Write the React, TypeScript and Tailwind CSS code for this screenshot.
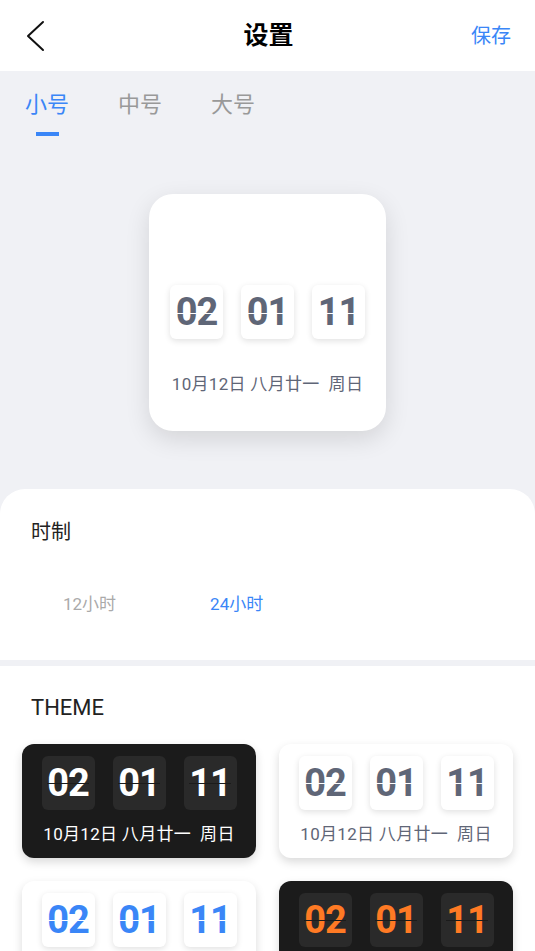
type Theme = {
  card: string;
  box: string;
  digit: string;
  line: string;
  date: string;
};

const themes: Theme[] = [
  { card: 'bg-[#1b1b1b]', box: 'bg-[#2a2a2a]', digit: 'text-white', line: 'bg-[#1b1b1b]', date: 'text-white' },
  { card: 'bg-white', box: 'bg-white shadow-[0_2px_6px_rgba(0,0,0,0.12)]', digit: 'text-[#5f6677]', line: 'bg-white', date: 'text-[#5f6677]' },
  { card: 'bg-white', box: 'bg-white shadow-[0_2px_6px_rgba(0,0,0,0.12)]', digit: 'text-[#3a86f7]', line: 'bg-white', date: 'text-[#3a86f7]' },
  { card: 'bg-[#1b1b1b]', box: 'bg-[#2a2a2a]', digit: 'text-[#ff7a24]', line: 'bg-[#1b1b1b]', date: 'text-white' },
];

const digits = ['02', '01', '11'];
const cjk = { fontFamily: 'Roboto, "Noto Sans CJK SC", sans-serif' };

function FlipDigit({ value, theme }: { value: string; theme: Theme }) {
  return (
    <div className={`flex h-[54px] w-[53px] items-center justify-center rounded-[6px] ${theme.box}`}>
      <span
        className={`relative text-[38px] font-bold leading-none tracking-[-1px] ${theme.digit}`}
        style={{ fontFamily: 'Roboto, sans-serif' }}
      >
        {value}
        <span className={`absolute left-0 right-0 top-[52%] h-px ${theme.line}`} />
      </span>
    </div>
  );
}

function DateLine({ color }: { color: string }) {
  return (
    <p className={`text-[17px] tracking-[0.3px] ${color}`} style={cjk}>
      10月12日 八月廿一&nbsp;&nbsp;周日
    </p>
  );
}

function ThemeCard({ theme }: { theme: Theme }) {
  return (
    <div className={`flex h-[114px] flex-col items-center rounded-[12px] pt-[12px] shadow-[0_4px_10px_rgba(0,0,0,0.15)] ${theme.card}`}>
      <div className="flex gap-[18px]">
        {digits.map((d) => (
          <FlipDigit key={d} value={d} theme={theme} />
        ))}
      </div>
      <div className="mt-[12px]">
        <DateLine color={theme.date} />
      </div>
    </div>
  );
}

export default function App() {
  return (
    <div className="min-h-screen bg-[#f0f1f5]" style={cjk}>
      {/* Header */}
      <header className="flex h-[71px] items-center bg-white pl-[26px] pr-[24px]">
        <div className="flex flex-1">
          <svg width="20" height="32" viewBox="0 0 20 32" fill="none">
            <polyline points="17,2 2,16 17,30" stroke="#111" strokeWidth="2" strokeLinecap="round" strokeLinejoin="round" />
          </svg>
        </div>
        <h1 className="text-[25px] font-bold text-black">设置</h1>
        <div className="flex flex-1 justify-end">
          <span className="text-[20px] text-[#3a86f7]">保存</span>
        </div>
      </header>

      {/* Size tabs */}
      <div className="flex gap-[49px] px-[25px] pt-[17px]">
        {['小号', '中号', '大号'].map((t, i) => (
          <div key={t} className="flex flex-col items-center">
            <span className={`text-[22px] leading-[34px] ${i === 0 ? 'text-[#3a86f7]' : 'text-[#999999]'}`}>{t}</span>
            <span className={`mt-[10px] h-[4px] w-[23px] ${i === 0 ? 'bg-[#3a86f7]' : 'bg-transparent'}`} />
          </div>
        ))}
      </div>

      {/* Preview */}
      <div className="flex justify-center pt-[58px] pb-[58px]">
        <div className="flex h-[237px] w-[237px] flex-col items-center rounded-[24px] bg-white pt-[91px] shadow-[0_8px_24px_rgba(0,0,0,0.12)]">
          <div className="flex gap-[18px]">
            {digits.map((d) => (
              <FlipDigit key={d} value={d} theme={themes[1]} />
            ))}
          </div>
          <div className="mt-[33px]">
            <DateLine color="text-[#5f6677]" />
          </div>
        </div>
      </div>

      {/* Time format */}
      <section className="rounded-t-[25px] bg-white px-[31px] pt-[28px] pb-[42px]">
        <h2 className="text-[20px] text-[#222222]">时制</h2>
        <div className="mt-[45px] flex gap-[94px] pl-[32px] text-[17px]">
          <span className="text-[#aaaaaa]">12小时</span>
          <span className="text-[#3a86f7]">24小时</span>
        </div>
      </section>

      {/* Theme */}
      <section className="mt-[6px] bg-white px-[22px] pt-[25px] pb-[24px]">
        <h2 className="pl-[9px] text-[22px] text-[#222222]">THEME</h2>
        <div className="mt-[20px] grid grid-cols-2 gap-x-[23px] gap-y-[23px]">
          {themes.map((t, i) => (
            <ThemeCard key={i} theme={t} />
          ))}
        </div>
      </section>
    </div>
  );
}
